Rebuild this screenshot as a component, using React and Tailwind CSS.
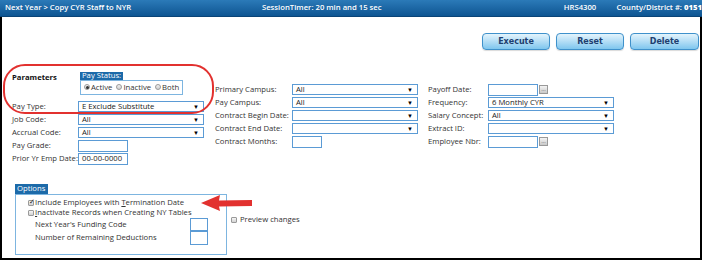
import React from 'react';

const Select = ({ value, width }) => (
    <div className={`flex h-[11px] items-center border border-[#5b9bd5] bg-white pl-[3px] text-[#222] ${width}`}>
        <span className="leading-none">{value}</span>
        <span className="ml-auto mr-[4px] text-[6px] leading-none text-black">▼</span>
    </div>
);

const TextBox = ({ value, width }) => (
    <div className={`flex h-[12px] items-center border border-[#5b9bd5] bg-white pl-[3px] text-[#222] ${width}`}>
        <span className="leading-none">{value}</span>
    </div>
);

const DateBox = () => (
    <div className="flex items-center gap-[1px]">
        <TextBox width="w-[50px]" />
        <div className="flex h-[9px] w-[9px] items-center justify-center border border-[#999] bg-gradient-to-b from-[#f4f4f4] to-[#c9c9c9] text-[6px] leading-none text-[#444]">
            ···
        </div>
    </div>
);

const Row = ({ label, labelWidth, children }) => (
    <div className="flex h-[13px] items-center">
        <span className={`whitespace-nowrap ${labelWidth}`}>{label}</span>
        {children}
    </div>
);

const Radio = ({ checked, label }) => (
    <span className="flex items-center">
        <span className="mr-[1px] flex h-[6px] w-[6px] items-center justify-center rounded-full border border-[#9a9a9a] bg-gradient-to-b from-[#f2f2f2] to-[#cfcfcf]">
            {checked && <span className="h-[3px] w-[3px] rounded-full bg-[#333]" />}
        </span>
        {label}
    </span>
);

const Check = ({ checked }) => (
    <span className="relative mr-[1px] flex h-[6px] w-[6px] shrink-0 items-center justify-center rounded-[1px] border border-[#9a9a9a] bg-gradient-to-b from-[#f6f6f6] to-[#d2d2d2]">
        {checked && <span className="absolute -top-[3px] left-0 text-[7px] leading-none text-[#222]">✓</span>}
    </span>
);

const Button = ({ children, width }) => (
    <button
        className={`h-[17px] rounded-[4px] border border-[#3f91cb] bg-gradient-to-b from-[#e4f4fc] to-[#7ec6ee] text-[8px] font-bold text-[#1e3f6f] shadow-[0_1px_1px_rgba(0,0,0,0.15)] ${width}`}
        style={{ fontFamily: '"DejaVu Sans", sans-serif' }}
    >
        {children}
    </button>
);

export default function App() {
    return (
        <div
            className="relative flex h-[260px] w-[702px] flex-col overflow-hidden bg-white text-[7.7px] text-[#333]"
            style={{ fontFamily: '"Open Sans", sans-serif' }}
        >
            {/* title bar */}
            <div className="flex h-[17px] shrink-0 items-center whitespace-nowrap border-b border-[#0a4477] bg-gradient-to-b from-[#2b7ab8] to-[#0d5592] font-semibold text-white">
                <span className="w-[263px] pl-[5px]">Next Year &gt; Copy CYR Staff to NYR</span>
                <span className="w-[303px]">SessionTimer: 20 min and 15 sec</span>
                <span className="w-[53px]">HRS4300</span>
                <span>
                    County/District #: <b>0151</b>
                </span>
            </div>

            <div className="flex flex-1 flex-col border-x-2 border-b-2 border-black">
                <div className="flex justify-end gap-[6px] pr-[1px] pt-[16px]">
                    <Button width="w-[68px]">Execute</Button>
                    <Button width="w-[68px]">Reset</Button>
                    <Button width="w-[69px]">Delete</Button>
                </div>

                <div className="flex pl-[10px]">
                    {/* left column */}
                    <div className="w-[203px] pt-[22px]">
                        <div className="flex">
                            <span className="w-[68px] font-bold text-[#111]">Parameters</span>
                            <div className="flex flex-col">
                                <span className="flex h-[8px] w-[43px] items-center bg-[#1c6aa9] pl-[2px] text-white">Pay Status:</span>
                                <div className="flex h-[15px] w-[103px] items-center gap-[4px] border border-[#7db5e0] pl-[3px]">
                                    <Radio checked label="Active" />
                                    <Radio label="Inactive" />
                                    <Radio label="Both" />
                                </div>
                            </div>
                        </div>
                        <div className="mt-[5px]">
                            <Row label="Pay Type:" labelWidth="w-[66px]">
                                <Select value="E Exclude Substitute" width="w-[126px]" />
                            </Row>
                            <Row label="Job Code:" labelWidth="w-[66px]">
                                <Select value="All" width="w-[126px]" />
                            </Row>
                            <Row label="Accrual Code:" labelWidth="w-[66px]">
                                <Select value="All" width="w-[126px]" />
                            </Row>
                            <Row label="Pay Grade:" labelWidth="w-[66px]">
                                <TextBox width="w-[50px]" />
                            </Row>
                            <Row label="Prior Yr Emp Date:" labelWidth="w-[66px]">
                                <TextBox value="00-00-0000" width="w-[50px]" />
                            </Row>
                        </div>
                    </div>

                    {/* middle column */}
                    <div className="w-[213px] pt-[33px]">
                        <Row label="Primary Campus:" labelWidth="w-[77px]">
                            <Select value="All" width="w-[126px]" />
                        </Row>
                        <Row label="Pay Campus:" labelWidth="w-[77px]">
                            <Select value="All" width="w-[126px]" />
                        </Row>
                        <Row label="Contract Begin Date:" labelWidth="w-[77px]">
                            <Select width="w-[126px]" />
                        </Row>
                        <Row label="Contract End Date:" labelWidth="w-[77px]">
                            <Select width="w-[126px]" />
                        </Row>
                        <Row label="Contract Months:" labelWidth="w-[77px]">
                            <TextBox width="w-[30px]" />
                        </Row>
                    </div>

                    {/* right column */}
                    <div className="pt-[33px]">
                        <Row label="Payoff Date:" labelWidth="w-[60px]">
                            <DateBox />
                        </Row>
                        <Row label="Frequency:" labelWidth="w-[60px]">
                            <Select value="6 Monthly CYR" width="w-[126px]" />
                        </Row>
                        <Row label="Salary Concept:" labelWidth="w-[60px]">
                            <Select value="All" width="w-[126px]" />
                        </Row>
                        <Row label="Extract ID:" labelWidth="w-[60px]">
                            <Select width="w-[126px]" />
                        </Row>
                        <Row label="Employee Nbr:" labelWidth="w-[60px]">
                            <DateBox />
                        </Row>
                    </div>
                </div>

                {/* options */}
                <div className="ml-[13px] mt-[19px] flex">
                    <div className="flex flex-col">
                        <span className="flex h-[10px] w-[33px] items-center bg-[#1c6aa9] pl-[2px] text-white">Options</span>
                        <div className="h-[61px] w-[212px] border border-[#7db5e0] pl-[12px] pt-[3px]">
                            <div className="flex h-[10px] items-center">
                                <Check checked />
                                <span>
                                    Include Employees with <span className="underline">T</span>ermination Date
                                </span>
                            </div>
                            <div className="flex h-[10px] items-center">
                                <Check />
                                <span>
                                    <span className="underline">I</span>nactivate Records when Creating NY Tables
                                </span>
                            </div>
                            <div className="flex h-[13px] items-center pl-[7px]">
                                <span className="w-[155px]">Next Year's Funding Code</span>
                                <div className="h-[13px] w-[18px] border border-[#5b9bd5]" />
                            </div>
                            <div className="flex h-[13px] items-center pl-[7px]">
                                <span className="w-[155px]">Number of Remaining Deductions</span>
                                <div className="h-[14px] w-[18px] border border-[#5b9bd5]" />
                            </div>
                        </div>
                    </div>
                    <div className="ml-[4px] mt-[31px] flex h-[10px] items-center gap-[2px] text-[#333]">
                        <Check />
                        <span>Preview changes</span>
                    </div>
                </div>
            </div>

            {/* annotation: red outline */}
            <div className="absolute left-[3px] top-[64px] h-[50px] w-[211px] rounded-[22px] border-[2.5px] border-[#e2312f]" />

            {/* annotation: red arrow */}
            <svg className="absolute left-[198px] top-[193px]" width="58" height="20" viewBox="0 0 58 20">
                <path d="M3 10 L22 2 L21 7.5 L54 7 L54 13 L21 13.5 L22 18 Z" fill="#e2312f" />
            </svg>
        </div>
    );
}
